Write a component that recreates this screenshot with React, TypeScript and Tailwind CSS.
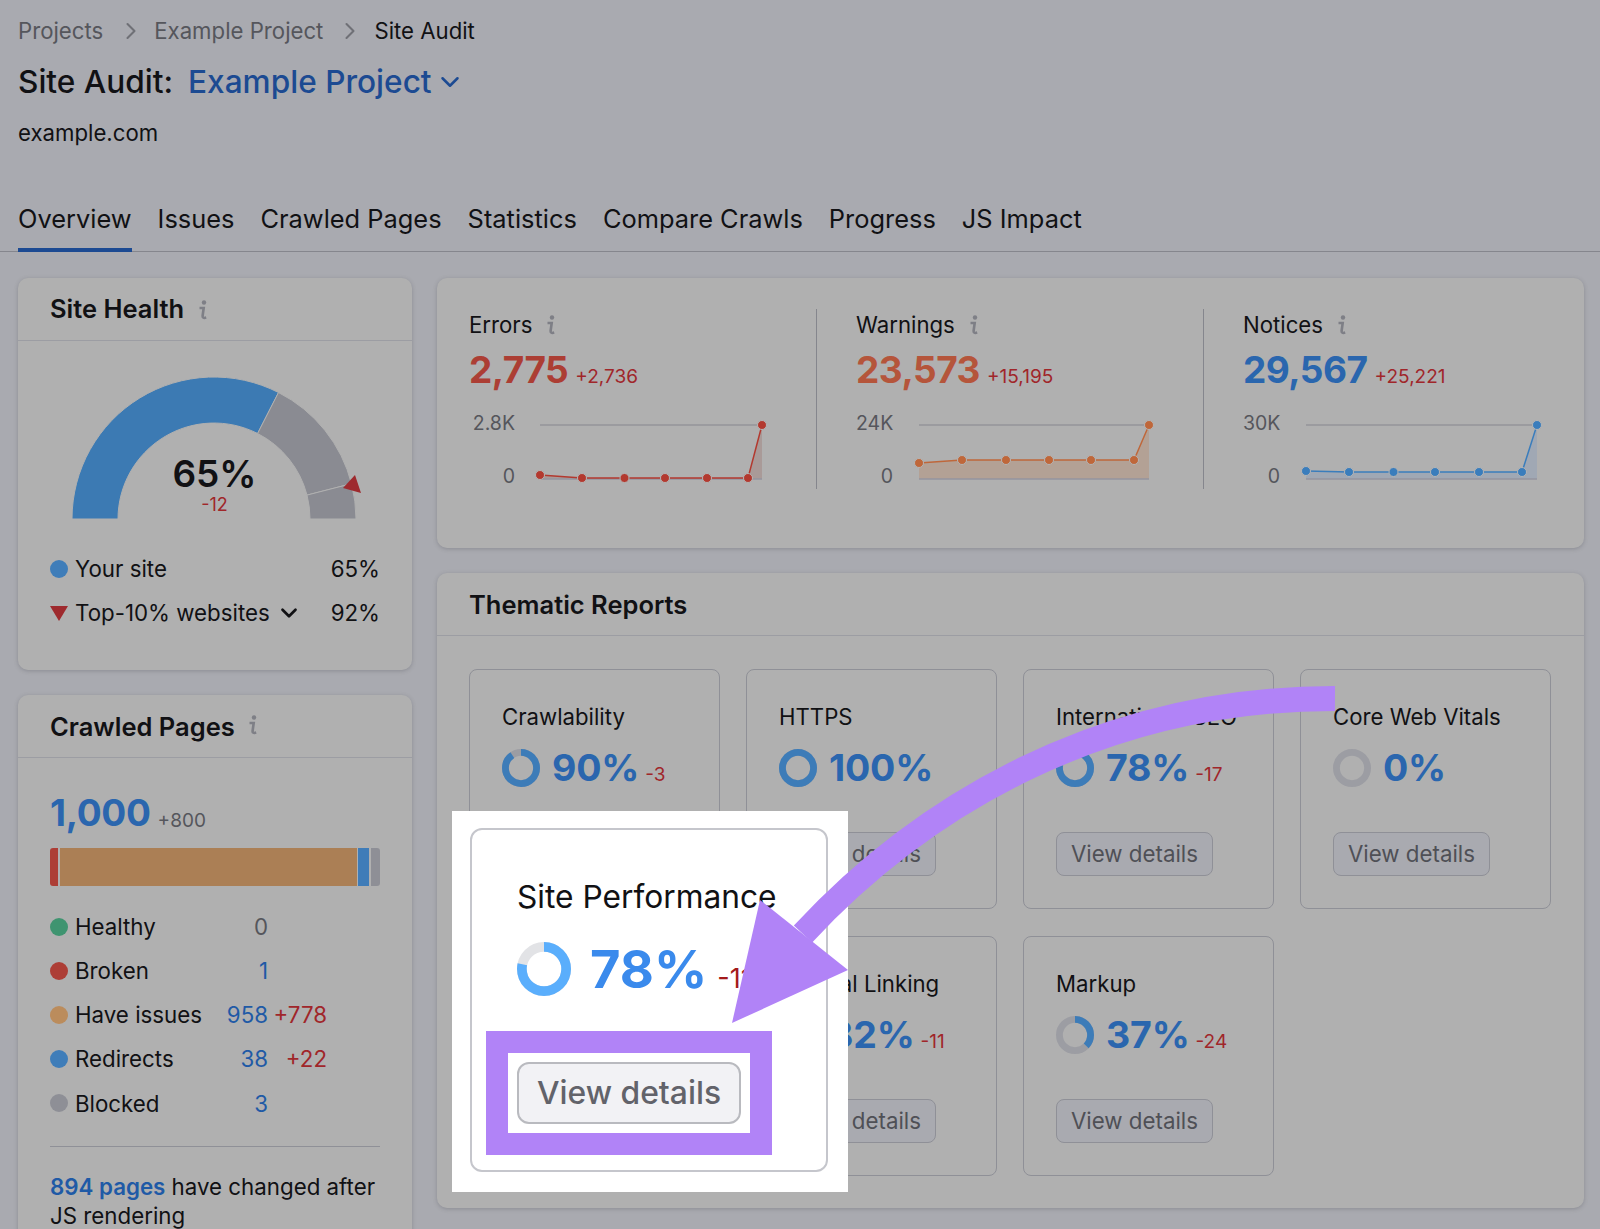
import React from 'react';
import { ChevronDown, ChevronRight } from 'lucide-react';

const tabs = ['Overview', 'Issues', 'Crawled Pages', 'Statistics', 'Compare Crawls', 'Progress', 'JS Impact'];

const metrics = [
  {
    label: 'Errors', value: '2,775', delta: '+2,736', top: '2.8K', axis: 'w-[46px]', gap: 'ml-[17px]', box: 'w-[348px] pl-0', color: '#ac3e34', line: '#b3392f', fill: '#a99a98',
    points: [[8, 59], [50, 62], [92.5, 62], [133, 62], [175, 62], [216, 62], [230, 9]],
  },
  {
    label: 'Warnings', value: '23,573', delta: '+15,195', top: '24K', axis: 'w-[37px]', gap: 'ml-[18px]', box: 'w-[387px] pl-[39px]', color: '#b5553b', line: '#bf673a', fill: '#b3a195',
    points: [[8, 47], [51, 44], [95, 44], [138, 44], [180, 44], [223, 44], [238, 9]],
  },
  {
    label: 'Notices', value: '29,567', delta: '+25,221', top: '30K', axis: 'w-[37px]', gap: 'ml-[18px]', box: 'w-[380px] pl-[39px] border-r-0', color: '#2a66ae', line: '#3a7dbc', fill: '#a0a8b4',
    points: [[8, 55], [51, 56], [95.5, 56], [137, 56], [181, 56], [224, 56], [239, 9]],
  },
];

const reports = [
  { name: 'Crawlability', pct: 90, delta: '-3' },
  { name: 'HTTPS', pct: 100 },
  { name: 'International SEO', pct: 78, delta: '-17' },
  { name: 'Core Web Vitals', pct: 0 },
  { name: 'Site Performance', pct: 78, delta: '-11' },
  { name: 'Internal Linking', pct: 82, delta: '-11' },
  { name: 'Markup', pct: 37, delta: '-24' },
];

const pages = [
  { name: 'Healthy', dot: 'bg-[#3f9470]', value: '0', muted: true },
  { name: 'Broken', dot: 'bg-[#ad3e36]', value: '1' },
  { name: 'Have issues', dot: 'bg-[#bb8c5c]', value: '958', delta: '+778' },
  { name: 'Redirects', dot: 'bg-[#3f7db9]', value: '38', delta: '+22' },
  { name: 'Blocked', dot: 'bg-[#8e8f96]', value: '3' },
];

function InfoIcon() {
  return (
    <svg width="12" height="22" viewBox="0 0 12 22" className="shrink-0">
      <circle cx="7" cy="3.5" r="2.2" fill="#7e7f86" />
      <path d="M2.5 9h4.2L5.6 17c-.2 1.6.9 2.4 3.6 1.6" fill="none" stroke="#7e7f86" strokeWidth="2.6" />
    </svg>
  );
}

function Donut({ pct, size, track, color }: { pct: number; size: number; track: string; color: string }) {
  const stroke = size * 0.18;
  const r = (size - stroke) / 2;
  const c = 2 * Math.PI * r;
  return (
    <svg width={size} height={size} viewBox={`0 0 ${size} ${size}`} className="shrink-0 -rotate-90">
      <circle cx={size / 2} cy={size / 2} r={r} fill="none" stroke={track} strokeWidth={stroke} />
      <circle cx={size / 2} cy={size / 2} r={r} fill="none" stroke={color} strokeWidth={stroke} strokeDasharray={`${(c * pct) / 100} ${c}`} />
    </svg>
  );
}

function Sparkline({ points, line, fill }: { points: number[][]; line: string; fill: string }) {
  const last = points[points.length - 1];
  const area = `${points.map((p) => p.join(',')).join(' ')} ${last[0]},63 ${points[0][0]},63`;
  return (
    <svg width="248" height="70" viewBox="0 0 248 70" className="shrink-0">
      <line x1="8" y1="9" x2={last[0]} y2="9" stroke="#94959a" strokeWidth="1.5" />
      <polygon points={area} fill={fill} />
      <line x1="8" y1="63" x2={last[0]} y2="63" stroke="#94959f" strokeWidth="1.5" />
      <polyline points={points.map((p) => p.join(',')).join(' ')} fill="none" stroke={line} strokeWidth="1.5" />
      {points.map((p, i) => (
        <circle key={i} cx={p[0]} cy={p[1]} r="4.5" fill={line} stroke="#b5b5b5" strokeWidth="1" />
      ))}
    </svg>
  );
}

// angle in degrees, measured from the left end of the half ring
function gaugeArc(from: number, to: number) {
  const cx = 150;
  const cy = 146;
  const pt = (deg: number, r: number) => {
    const a = (deg * Math.PI) / 180;
    return `${(cx - r * Math.cos(a)).toFixed(1)} ${(cy - r * Math.sin(a)).toFixed(1)}`;
  };
  return `M${pt(from, 142)} A142 142 0 0 1 ${pt(to, 142)} L${pt(to, 96)} A96 96 0 0 0 ${pt(from, 96)} Z`;
}

function ReportCard({ name, pct, delta }: { name: string; pct: number; delta?: string }) {
  return (
    <div className="h-[240px] rounded-[8px] border-[1.5px] border-[#8f9097] pl-[32px] pt-[34px]">
      <div className="text-[22.2px] leading-[26px] text-[#111114] whitespace-nowrap">{name}</div>
      <div className="mt-[16px] flex h-[44px] items-center gap-[12px]">
        <Donut pct={pct} size={38} track="#9c9da3" color="#3d7cb8" />
        <div className="flex items-baseline gap-[6px]">
          <span className="text-[37.5px] font-bold leading-[44px] tracking-[-0.2px] text-[#2a66ae]">{pct}%</span>
          {delta && <span className="text-[19px] text-[#a0262a]">{delta}</span>}
        </div>
      </div>
      <button className="mt-[42px] h-[44px] w-[157px] rounded-[8px] border-[1.5px] border-[#8f9097] bg-[#a9aab0] text-[22.3px] text-[#4f5056]">
        View details
      </button>
    </div>
  );
}

export default function App() {
  return (
    <div className="relative h-[1229px] overflow-hidden bg-[#a9aab0] font-['Inter',sans-serif] text-[#111114]">
      {/* Page header */}
      <div className="flex px-[18px] pt-[18px] text-[22.2px] leading-[26px] text-[#55565c]">
        <span>Projects</span>
        <ChevronRight size={28} strokeWidth={1.8} className="ml-[14px] mr-[9px] -translate-y-px text-[#6f7076]" />
        <span>Example Project</span>
        <ChevronRight size={28} strokeWidth={1.8} className="ml-[13px] mr-[10px] -translate-y-px text-[#6f7076]" />
        <span className="text-[#111114]">Site Audit</span>
      </div>
      <div className="mt-[16px] flex h-[40px] items-center px-[18px] text-[31.6px] font-medium leading-[40px]">
        <span>Site Audit:</span>
        <span className="ml-[15px] text-[#1c4a92]">Example Project</span>
        <ChevronDown size={30} strokeWidth={2} className="ml-[3px] text-[#1c4a92]" />
      </div>
      <div className="mt-[18px] px-[18px] text-[22.2px] leading-[26px]">example.com</div>

      {/* Tabs */}
      <div className="mt-[58px] flex h-[48px] gap-[26px] border-b border-[#85868d] px-[18px]">
        {tabs.map((tab, i) => (
          <div
            key={tab}
            className={`h-[48px] text-[25.42px] leading-[30px] whitespace-nowrap ${i === 0 ? 'border-b-[4px] border-[#1c4a92]' : ''}`}
          >
            {tab}
          </div>
        ))}
      </div>

      <div className="mt-[26px] flex gap-[25px] px-[18px]">
        {/* Left column */}
        <div className="flex w-[394px] shrink-0 flex-col gap-[25px]">
          <section className="h-[392px] rounded-[10px] bg-[#b0b0b0] shadow-[0_1px_4px_rgba(70,70,80,0.3)]">
            <div className="flex h-[63px] items-center gap-[13px] border-b border-[#9c9da3] pl-[32px] pt-[1px]">
              <h2 className="text-[25.5px] font-semibold">Site Health</h2>
              <InfoIcon />
            </div>
            <div className="relative ml-[46px] mt-[32px] h-[150px] w-[300px]">
              <svg width="300" height="150" viewBox="0 0 300 150">
                <path d={gaugeArc(0, 117)} fill="#3c7ab3" stroke="#b0b0b0" strokeWidth="1" />
                <path d={gaugeArc(117, 165.6)} fill="#8a8b92" stroke="#b0b0b0" strokeWidth="1" />
                <path d={gaugeArc(165.6, 180)} fill="#8a8b92" stroke="#b0b0b0" strokeWidth="1" />
                <polygon points="291,102 279,115 297,120" fill="#9e2a2e" />
              </svg>
              <div className="absolute left-px right-0 top-[78px] text-center text-[37px] font-semibold leading-[46px]">65%</div>
              <div className="absolute left-px right-0 top-[121px] text-center text-[18px] leading-[22px] text-[#a0262a]">-12</div>
            </div>
            <div className="mt-[24px] pl-[32px] pr-[32px] text-[22.3px]">
              <div className="flex h-[44px] items-center">
                <span className="h-[18px] w-[18px] rounded-full bg-[#3f7db9]" />
                <span className="ml-[7px] flex-1">Your site</span>
                <span>65%</span>
              </div>
              <div className="flex h-[44px] items-center">
                <svg width="18" height="15" viewBox="0 0 18 15"><polygon points="0,0 18,0 9,15" fill="#9e2a2e" /></svg>
                <span className="ml-[7px]">Top-10% websites</span>
                <ChevronDown size={26} strokeWidth={2.5} className="ml-[6px]" />
                <span className="ml-auto">92%</span>
              </div>
            </div>
          </section>

          <section className="h-[600px] rounded-[10px] bg-[#b0b0b0] shadow-[0_1px_4px_rgba(70,70,80,0.3)]">
            <div className="flex h-[63px] items-center gap-[12px] border-b border-[#9c9da3] pl-[32px] pt-[3px]">
              <h2 className="text-[25.5px] font-semibold">Crawled Pages</h2>
              <span className="-translate-y-[3px]"><InfoIcon /></span>
            </div>
            <div className="px-[32px] pt-[33px]">
              <div className="flex items-baseline gap-[7px]">
                <span className="text-[37px] font-bold leading-[44px] tracking-[-0.3px] text-[#2a66ae]">1,000</span>
                <span className="translate-y-px text-[19px] text-[#55565c]">+800</span>
              </div>
              <div className="mt-[13px] flex h-[38px] w-[330px] overflow-hidden rounded-[3px]">
                <div className="w-[8px] bg-[#ad3e36]" />
                <div className="ml-[2px] w-[297px] bg-[#ab7f55]" />
                <div className="ml-px w-[11px] bg-[#3f7cb8]" />
                <div className="ml-[2px] w-[9px] bg-[#8e8f96]" />
              </div>
              <div className="mt-[18.5px] text-[22.3px]">
                {pages.map((row) => (
                  <div key={row.name} className="grid h-[44.2px] grid-cols-[25px_131px_62px_59px] items-center">
                    <span className={`h-[18px] w-[18px] rounded-full ${row.dot}`} />
                    <span>{row.name}</span>
                    <span className={`text-right ${row.muted ? 'text-[#55565c]' : 'text-[#1f5aa6]'}`}>{row.value}</span>
                    <span className="text-right text-[#a0262a]">{row.delta}</span>
                  </div>
                ))}
              </div>
              <div className="mt-[21px] h-px bg-[#8f9097]" />
              <p className="mt-[25px] text-[22.3px] leading-[29px]">
                <span className="font-semibold text-[#1f5aa6]">894 pages</span> have changed after JS rendering
              </p>
            </div>
          </section>
        </div>

        {/* Right column */}
        <div className="flex w-[1147px] shrink-0 flex-col gap-[25px]">
          <section className="flex h-[270px] rounded-[10px] bg-[#b0b0b0] pl-[32px] pt-[31px] shadow-[0_1px_4px_rgba(70,70,80,0.3)]">
            {metrics.map((m) => (
              <div key={m.label} className={`h-[180px] shrink-0 border-r border-[#85868d] ${m.box}`}>
                <div className="mt-[3px] flex h-[26px] items-center gap-[13px] text-[22.2px] leading-[26px]">
                  {m.label}
                  <InfoIcon />
                </div>
                <div className="mt-[10px] flex items-baseline gap-[7px]">
                  <span className="text-[37px] font-bold leading-[44px] tracking-[-0.5px]" style={{ color: m.color }}>{m.value}</span>
                  <span className="text-[19px] text-[#a0262a]">{m.delta}</span>
                </div>
                <div className="mt-[19px] flex">
                  <div className={`flex h-[77px] flex-col justify-between text-right text-[19.5px] leading-[24px] text-[#55565c] ${m.axis}`}>
                    <span>{m.top}</span>
                    <span>0</span>
                  </div>
                  <div className={`mt-[5px] ${m.gap}`}>
                    <Sparkline points={m.points} line={m.line} fill={m.fill} />
                  </div>
                </div>
              </div>
            ))}
          </section>

          <section className="h-[635px] rounded-[10px] bg-[#b0b0b0] shadow-[0_1px_4px_rgba(70,70,80,0.3)]">
            <div className="flex h-[63px] items-center border-b border-[#9c9da3] pl-[32px] pt-[3px]">
              <h2 className="text-[25.5px] font-semibold">Thematic Reports</h2>
            </div>
            <div className="grid grid-cols-[repeat(4,251px)] gap-x-[26px] gap-y-[27px] pl-[32px] pt-[33px]">
              {reports.map((r) => (
                <ReportCard key={r.name} {...r} />
              ))}
            </div>
          </section>
        </div>
      </div>

      {/* Highlighted card */}
      <div className="absolute left-[452px] top-[811px] h-[381px] w-[396px] bg-white pl-[18px] pt-[17px]">
        <div className="h-[344px] w-[358px] rounded-[12px] border-2 border-[#c5c6cc] pl-[45px] pt-[47px]">
          <div className="text-[31.7px] leading-[40px] text-[#111114] whitespace-nowrap">Site Performance</div>
          <div className="mt-[22px] flex h-[60px] items-center gap-[19px]">
            <Donut pct={78} size={54} track="#e2e3e6" color="#5aaefc" />
            <div className="flex items-baseline gap-[10px]">
              <span className="text-[52.5px] font-bold leading-[60px] text-[#3a8aec]">78%</span>
              <span className="text-[27px] text-[#a31a1a]">-11</span>
            </div>
          </div>
          <div className="relative mt-[63px] h-[62px] w-[224px]">
            <div className="absolute -inset-[31px] border-[22px] border-[#b183f7]" />
            <button className="relative h-[62px] w-[224px] rounded-[12px] border-2 border-[#b9babf] bg-[#f2f2f5] text-[31.8px] font-medium text-[#62636a]">
              View details
            </button>
          </div>
        </div>
      </div>

      {/* Callout arrow */}
      <svg className="pointer-events-none absolute left-0 top-0" width="1600" height="1229" viewBox="0 0 1600 1229">
        <path d="M1335 698.5C1100 698 920 808 803 934" fill="none" stroke="#b183f7" strokeWidth="25" />
        <polygon points="732,1023 760,900 848,970" fill="#b183f7" />
      </svg>
    </div>
  );
}
